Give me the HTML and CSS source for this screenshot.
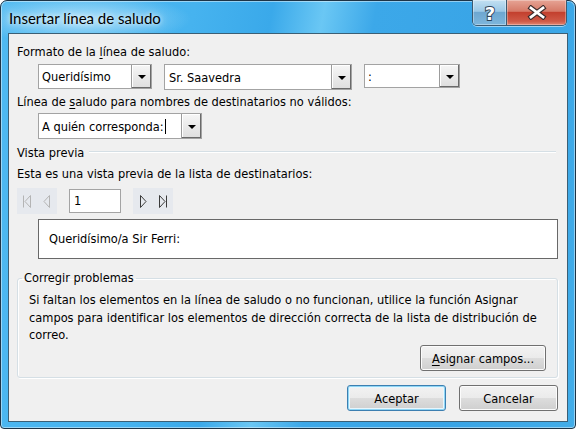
FILE: index.html
```html
<!DOCTYPE html>
<html lang="es">
<head>
<meta charset="utf-8">
<title>Insertar línea de saludo</title>
<link rel="stylesheet" href="styles.css">
</head>
<body>
<div class="window">
  <div class="titlebar">
    <span class="title">Insertar línea de saludo</span>
    <div class="caption-btns">
      <div class="cap-btn help">
        <svg width="18" height="22" viewBox="0 0 18 22"><text x="9" y="18" text-anchor="middle" class="q">?</text></svg>
      </div>
      <div class="cap-btn close">
        <svg width="20" height="15" viewBox="0 0 20 15"><path d="M4 3 L16 12 M16 3 L4 12" class="x-out"/><path d="M4 3 L16 12 M16 3 L4 12" class="x-in"/></svg>
      </div>
    </div>
  </div>
  <div class="client">
    <div class="label">Formato de la <u>l</u>ínea de saludo:</div>
    <div class="combo-row">
      <div class="combo c1"><span class="val">Queridísimo</span><span class="drop"><i class="tri"></i></span></div>
      <div class="combo c2"><span class="val">Sr. Saavedra</span><span class="drop"><i class="tri"></i></span></div>
      <div class="combo c3"><span class="val">:</span><span class="drop"><i class="tri"></i></span></div>
    </div>
    <div class="label gap4">Línea de <u>s</u>aludo para nombres de destinatarios no válidos:</div>
    <div class="combo-row gap3">
      <div class="combo c4"><span class="val">A quién corresponda:<span class="caret"></span></span><span class="drop"><i class="tri"></i></span></div>
    </div>
    <div class="section"><span>Vista previa</span><span class="sep"></span></div>
    <div class="label gap6">Esta es una vista previa de la lista de destinatarios:</div>
    <div class="nav">
      <div class="navgroup">
        <span class="navbtn off"><svg width="10" height="13" viewBox="0 0 10 13"><path d="M1.5 0.5 V12.5 M8.5 0.5 L3 6.5 L8.5 12.5 Z"/></svg></span>
        <span class="navbtn off"><svg width="10" height="13" viewBox="0 0 10 13"><path d="M7.5 0.5 L2 6.5 L7.5 12.5 Z"/></svg></span>
      </div>
      <div class="recnum">1</div>
      <div class="navgroup">
        <span class="navbtn"><svg width="10" height="13" viewBox="0 0 10 13"><path d="M2.5 0.5 L8 6.5 L2.5 12.5 Z"/></svg></span>
        <span class="navbtn"><svg width="10" height="13" viewBox="0 0 10 13"><path d="M1.5 0.5 L7 6.5 L1.5 12.5 Z M8.5 0.5 V12.5"/></svg></span>
      </div>
    </div>
    <div class="preview">Queridísimo/a Sir Ferri:</div>
    <fieldset class="group">
      <legend>Corregir problemas</legend>
      <p>Si faltan los elementos en la línea de saludo o no funcionan, utilice la función Asignar<br>campos para identificar los elementos de dirección correcta de la lista de distribución de<br>correo.</p>
      <div class="group-actions"><button class="btn wide"><u>A</u>signar campos...</button></div>
    </fieldset>
    <div class="footer">
      <button class="btn default">Aceptar</button>
      <button class="btn">Cancelar</button>
    </div>
  </div>
</div>
</body>
</html>
```
FILE: styles.css
```css
* { box-sizing: border-box; }
html, body { margin: 0; padding: 0; background: #ffffff; }
body {
  width: 576px;
  height: 430px;
  overflow: hidden;
  font-family: "DejaVu Sans Condensed", "DejaVu Sans", sans-serif;
  font-size: 12.7px;
  color: #000;
}
u { text-decoration: underline; text-underline-offset: 2px; }

.window {
  width: 576px;
  height: 429px;
  border: 1px solid #1d3447;
  border-radius: 7px 7px 4px 4px;
  background:
    radial-gradient(ellipse 110px 26px at 80px 18px, rgba(200,236,252,0.75), rgba(200,236,252,0) 100%),
    linear-gradient(100deg, #4fb9f1 0%, #46b3ef 30%, #3aa9ea 42%, #6ac7f4 50%, #3ca8e9 58%, #38a4e6 80%, #42ade9 100%);
  box-shadow: inset 0 0 0 1px rgba(255,255,255,0.45);
  display: flex;
  flex-direction: column;
  padding: 0 7px 6px 7px;
}

.titlebar {
  height: 32px;
  display: flex;
  align-items: flex-start;
}
.title {
  font-family: Lato, "Open Sans", sans-serif;
  font-size: 15px;
  line-height: 29px;
  padding-top: 3px;
  margin-left: 1px;
  color: #000;
  text-shadow: 0 0 8px rgba(255,255,255,0.9), 0 0 4px rgba(255,255,255,0.7);
}
.caption-btns {
  margin-left: auto;
  margin-right: 1px;
  margin-top: -1px;
  display: flex;
  border: 1px solid #3c5a70;
  border-top: none;
  border-radius: 0 0 5px 5px;
  overflow: hidden;
  box-shadow: 0 1px 0 rgba(255,255,255,0.5);
}
.cap-btn {
  height: 25px;
  display: flex;
  align-items: center;
  justify-content: center;
}
.help {
  width: 34px;
  background: linear-gradient(#c2e0f2 0%, #9bc8e6 45%, #6ea7d0 50%, #7db6dc 100%);
  border-right: 1px solid #3c5a70;
  box-shadow: inset 0 0 0 1px rgba(255,255,255,0.35);
}
.close {
  width: 59px;
  background: linear-gradient(#e6a495 0%, #d67a68 45%, #c3402e 50%, #cf5a47 85%, #e18572 100%);
  box-shadow: inset 0 0 0 1px rgba(255,255,255,0.3);
}
.q {
  font-family: "DejaVu Sans", sans-serif;
  font-weight: bold;
  font-size: 18px;
  fill: #ffffff;
  stroke: #2d4256;
  stroke-width: 1.8px;
  paint-order: stroke;
}
.x-out { stroke: #3b2a2a; stroke-width: 5; stroke-linecap: square; fill: none; }
.x-in { stroke: #ffffff; stroke-width: 2.8; stroke-linecap: square; fill: none; }

.client {
  flex: 1;
  border: 1px solid #3b5f75;
  background: #f0f0f0;
  padding: 10px 9px 9px 8px;
  display: flex;
  flex-direction: column;
}

.label { height: 16px; line-height: 16px; white-space: nowrap; }
.gap4 { margin-top: 4px; }
.gap3 { margin-top: 3px !important; }
.gap6 { margin-top: 6px; }

.combo-row {
  margin-top: 4px;
  margin-left: 21px;
  height: 26px;
  display: flex;
  align-items: flex-start;
  gap: 12px;
}
.combo {
  display: flex;
  border: 1px solid #a3a3a3;
  background: #fff;
}
.combo .val {
  flex: 1;
  padding-left: 3px;
  display: flex;
  align-items: center;
  white-space: nowrap;
  overflow: hidden;
}
.c1 { width: 114px; height: 25px; }
.c2 { width: 188px; height: 26px; }
.c2 .val { padding-left: 4px; }
.c3 { width: 96px; height: 24px; }
.c4 { width: 164px; height: 26px; }
.drop {
  width: 20px;
  flex: none;
  display: flex;
  align-items: center;
  justify-content: center;
  background: linear-gradient(#f6f6f6, #dedede);
  border-left: 1px solid #9c9c9c;
  box-shadow: inset -1px -1px 0 #6a6a6a, inset 1px 1px 0 #ffffff;
}
.tri {
  width: 0;
  height: 0;
  border-left: 4px solid transparent;
  border-right: 4px solid transparent;
  border-top: 4px solid #000;
  margin-top: 1px;
}
.caret {
  display: inline-block;
  width: 1px;
  height: 15px;
  background: #000;
  margin-left: 1px;
  flex: none;
}

.section {
  margin-top: 5px;
  height: 16px;
  display: flex;
  align-items: center;
  gap: 5px;
}
.sep {
  flex: 1;
  height: 2px;
  border-top: 1px solid #d5dfe5;
  border-bottom: 1px solid #ffffff;
  margin-right: 2px;
}

.nav {
  margin-top: 6px;
  height: 26px;
  display: flex;
  align-items: flex-start;
  gap: 12px;
}
.navgroup {
  width: 40px;
  height: 26px;
  display: flex;
  background: #e6e9ee;
}
.navbtn {
  width: 20px;
  height: 26px;
  display: flex;
  align-items: center;
  justify-content: center;
}
.navbtn path { fill: none; stroke: #3a3a3a; stroke-width: 1; }
.navbtn.off path { stroke: #b4b4b4; }
.recnum {
  width: 52px;
  height: 24px;
  margin-top: 1px;
  border: 1px solid #a4a4a4;
  background: #fff;
  padding-left: 4px;
  line-height: 22px;
}

.preview {
  margin-top: 5px;
  margin-left: 21px;
  height: 40px;
  border: 1px solid #686868;
  background: #fff;
  padding-left: 10px;
  line-height: 38px;
}

.group {
  margin: 11px 0 0 0;
  padding: 5px 11px 6px 11px;
  border: 1px solid #d5dfe5;
  border-radius: 3px;
  box-shadow: inset 1px 1px 0 #ffffff, 1px 1px 0 #ffffff;
  min-inline-size: 0;
}
.group legend {
  margin-left: -7px;
  padding: 0 2px;
  line-height: 16px;
  height: 16px;
}
.group p {
  margin: 0;
  line-height: 17.5px;
  white-space: nowrap;
}
.group-actions {
  margin-top: 1.5px;
  display: flex;
  justify-content: flex-end;
}

.btn {
  font: inherit;
  color: #000;
  height: 26px;
  width: 99px;
  padding: 0;
  border: 1px solid #707070;
  border-radius: 3px;
  background: linear-gradient(#f2f2f2 0%, #ebebeb 49%, #dddddd 50%, #cfcfcf 100%);
  box-shadow: inset 0 0 0 1px #fcfcfc;
}
.btn.wide { width: 126px; }
.btn.default {
  border-color: #3c7fb1;
  box-shadow: inset 0 0 0 1px #8fd6f5, inset 0 0 0 2px #e8f6fd;
}
.footer {
  margin-top: 7px;
  display: flex;
  justify-content: flex-end;
  gap: 13px;
}
```
